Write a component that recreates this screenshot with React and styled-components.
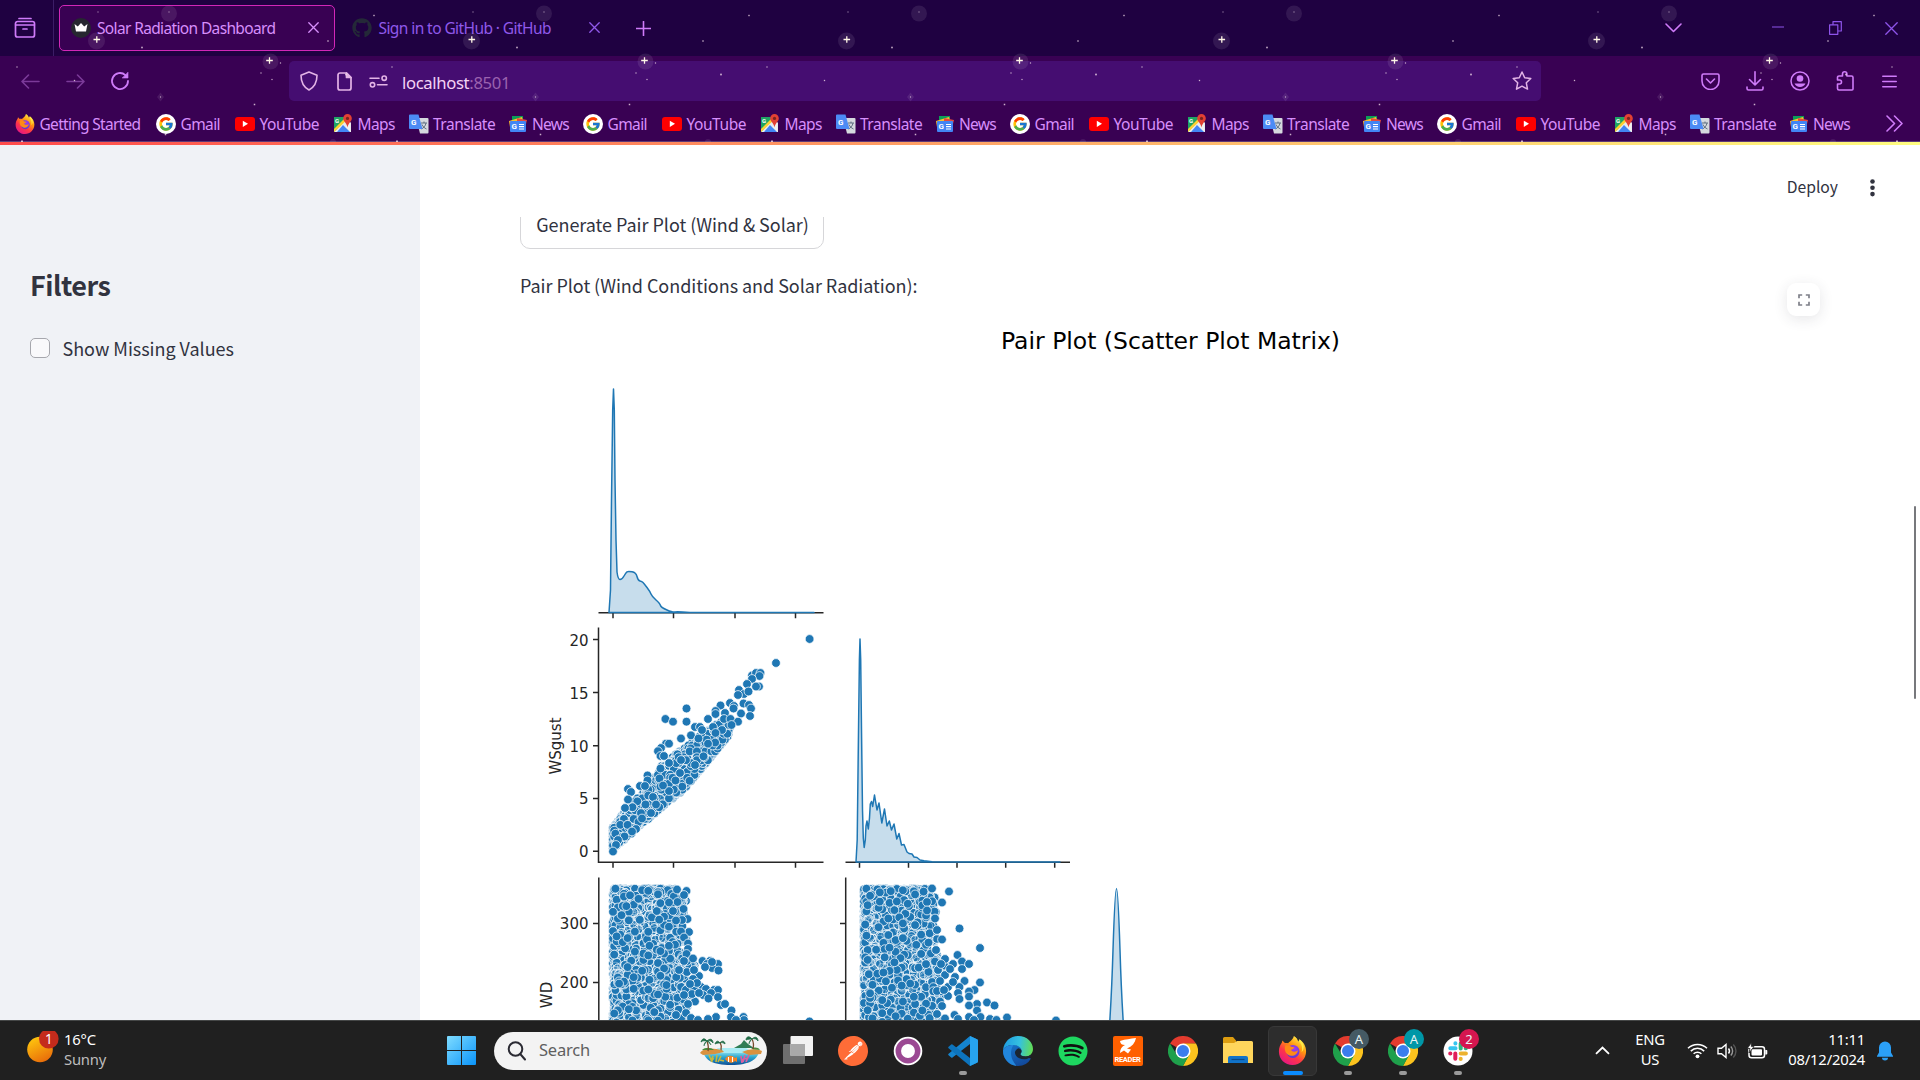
import React, { useMemo } from "react";
import styled, { createGlobalStyle } from "styled-components";
import { FcGoogle } from "react-icons/fc";
import { FaGithub, FaSpotify } from "react-icons/fa";
import { SiPostman } from "react-icons/si";

const GlobalStyle = createGlobalStyle`
  * { box-sizing: border-box; }
  html, body { margin: 0; padding: 0; width: 1920px; height: 1080px; overflow: hidden; background: #fff; }
  svg { display: block; flex: none; }
`;

const UI = `"Noto Sans", "Open Sans", sans-serif`;
const SOURCE = `"Noto Sans CJK JP", "Noto Sans CJK SC", sans-serif`;

const Screen = styled.div`
  display: flex;
  flex-direction: column;
  width: 1920px;
  height: 1080px;
  overflow: hidden;
`;

/* ---------- browser chrome ---------- */

const Chrome = styled.header`
  position: relative;
  display: flex;
  flex-direction: column;
  height: 145px;
  background: #390153;
  font-family: ${UI};
  color: #d78ffb;
`;
const StarLayer = styled.svg`
  position: absolute;
  left: 0;
  top: 0;
  pointer-events: none;
`;
const TabStrip = styled.div`
  display: flex;
  align-items: center;
  height: 56px;
  background: #1f0141;
`;
const Slot = styled.div`
  display: flex;
  align-items: center;
  justify-content: center;
  flex: none;
  width: ${(p) => p.$w}px;
  height: ${(p) => p.$h || 40}px;
  color: ${(p) => p.$c || "#cf7bf9"};
  margin-left: ${(p) => p.$ml || 0}px;
`;
const ViewSlot = styled(Slot)`
  height: 56px;
  border-right: 1px solid #3c1d66;
  padding-right: 3px;
`;
const Tab = styled.div`
  display: flex;
  align-items: center;
  width: ${(p) => p.$w}px;
  height: 46px;
  margin: 0 0 1px ${(p) => p.$ml}px;
  padding: 0 15px 0 11px;
  border: 1px solid ${(p) => (p.$active ? "#d227b8" : "transparent")};
  border-radius: 5px;
  background: ${(p) => (p.$active ? "#390153" : "transparent")};
  color: ${(p) => (p.$active ? "#d78ffb" : "#9059ea")};
`;
const TabTitle = styled.span`
  flex: 1;
  margin-left: ${(p) => p.$ml || 6}px;
  font-size: 15.5px;
  letter-spacing: ${(p) => p.$ls}px;
  line-height: 24px;
  white-space: nowrap;
`;
const Spacer = styled.div`
  flex: 1;
`;
const Toolbar = styled.div`
  display: flex;
  align-items: center;
  height: 50px;
`;
const UrlBar = styled.div`
  display: flex;
  align-items: center;
  width: 1252px;
  height: 40px;
  margin-left: 154px;
  border-radius: 5px;
  background: #450d71;
  color: #e3b4e6;
`;
const Address = styled.div`
  flex: 1;
  margin-left: 7px;
  font-size: 16.7px;
  letter-spacing: -0.36px;
  line-height: 24px;
  color: #f3d3f5;
  padding-top: 3px;
  span { color: #9a62ae; }
`;
const Bookmarks = styled.div`
  display: flex;
  align-items: center;
  height: 35px;
  padding-left: 15px;
`;
const Bookmark = styled.div`
  display: flex;
  align-items: center;
  flex: none;
  width: ${(p) => p.$w}px;
  font-size: 15.5px;
  letter-spacing: ${(p) => p.$ls}px;
  line-height: 24px;
  white-space: nowrap;
  color: #d78ffb;
  svg { margin-right: 4.5px; }
`;
const LoadLine = styled.div`
  height: 4px;
  border-top: 1px solid #5c3a78;
  background: linear-gradient(90deg, #ff4b4b, #fffd80);
`;

const STARS = [
  [98, 12, 1], [142, 47.5, 1.6], [374, 15.5, 1.4], [328, 41, 1.4], [280.5, 63, 1.2], [261, 73, 1.2],
  [272, 79.5, 1.2], [17, 67, 1.2], [74.5, 80.5, 1.3], [160.5, 97, 1.1], [254.5, 104.5, 1.5], [165.5, 134.5, 1.5],
  [346, 74.5, 1.7], [22, 141.5, 2], [169, 12, 1],
];
function Stars() {
  const tiles = [-1, 0, 1, 2, 3, 4, 5];
  return (
    <StarLayer width="1920" height="142" viewBox="0 0 1920 142">
      {tiles.map((t) => (
        <g key={t} transform={`translate(${t * 375} 0)`}>
          <g fill="#fff" fillOpacity="0.09">
            <circle cx="169" cy="13.5" r="8" />
            <circle cx="96.5" cy="41" r="8.5" />
            <circle cx="270.5" cy="61.5" r="8" />
            <path d="M160.5 92.5l3.5 4.5-3.5 4.5-3.5-4.5z" />
            <circle cx="333" cy="142" r="3" />
          </g>
          {STARS.map(([x, y, r], i) => (
            <rect key={i} x={x - r / 2} y={y - r / 2} width={r} height={r} fill="#f0dbe8" opacity="0.8" />
          ))}
          <g stroke="#fff6e6" strokeWidth="1.3">
            <path d="M93.5 39.5h6.6M96.8 36.2v6.6M266.2 60.5h6.6M269.5 57.2v6.6" />
          </g>
        </g>
      ))}
    </StarLayer>
  );
}

const line = { fill: "none", stroke: "currentColor", strokeWidth: 1.6, strokeLinecap: "round", strokeLinejoin: "round" };
function Glyph({ w, h, children, sw = 1.6 }) {
  return (
    <svg width={w} height={h} viewBox={`0 0 ${w} ${h}`} {...line} strokeWidth={sw}>
      {children}
    </svg>
  );
}
const CloseX = ({ s = 11 }) => (
  <Glyph w={s} h={s} sw={1.3}><path d={`M.8 .8L${s - 0.8} ${s - 0.8}M${s - 0.8} .8L.8 ${s - 0.8}`} /></Glyph>
);

function FirefoxLogo({ s }) {
  return (
    <svg width={s} height={s} viewBox="0 0 32 32">
      <defs>
        <linearGradient id="fxa" x1="0.85" y1="0.05" x2="0.25" y2="1">
          <stop offset="0" stopColor="#fff44f" /><stop offset="0.35" stopColor="#ff980e" />
          <stop offset="0.65" stopColor="#ff3647" /><stop offset="1" stopColor="#e31587" />
        </linearGradient>
        <radialGradient id="fxb" cx="0.6" cy="0.3" r="0.8">
          <stop offset="0" stopColor="#a23bf0" /><stop offset="1" stopColor="#4b3bd0" />
        </radialGradient>
      </defs>
      <path d="M17.500 0c2.500 1.500 4.200 3.700 4.800 6 .8-.2 1.300-1.400 1.300-2.500 4.800 3.200 7.400 8 7.400 13.300C31 25.300 24.300 32 16 32S1 25.600 1 17c0-3.900 1.400-7.400 3.200-9.500L4.800 5l2.800 2.800c1.200-.3 2.400-.2 3.500.2C12.300 6.200 16.200 5 17.500 0z" fill="url(#fxa)" />
      <circle cx="16.500" cy="17" r="7.200" fill="url(#fxb)" />
      <path d="M8 10.500c3-1 5.500 0 6.500 1.400l3.500.4c-.4 1.700-2.200 2.200-3.600 2.900 1 2.300 4.600 3.300 7.600.3-.4 4.500-4 6.700-7.500 6.300-5-.5-8.300-5.200-6.500-11.300z" fill="#ff8a16" />
      <path d="M17.500 0c3.500 5 11.500 8 8.500 18 4-4 2.800-11-2.400-14.500 0 1.100-.5 2.300-1.300 2.500-.6-2.300-2.300-4.500-4.800-6z" fill="#fff04a" opacity="0.85" />
    </svg>
  );
}
function GoogleBadge() {
  return (
    <svg width="20" height="20" viewBox="0 0 20 20">
      <circle cx="10" cy="10" r="10" fill="#fff" />
      <FcGoogle x="2" y="2" width="16" height="16" size={16} />
    </svg>
  );
}
const YoutubeLogo = () => (
  <svg width="20" height="20" viewBox="0 0 20 20">
    <rect x="0" y="3" width="20" height="14" rx="3" fill="#f00" />
    <path d="M7.800 6.700v6.200l5.200-3.100z" fill="#fff" />
  </svg>
);
const MapsLogo = () => (
  <svg width="20" height="20" viewBox="0 0 20 20">
    <path d="M1 3h13v15H1z" fill="#1fa463" />
    <path d="M1 18L14 4l4 5v9z" fill="#e8eaed" />
    <path d="M4 18l6-7 7 7z" fill="#4285f4" />
    <path d="M1 18v-3L12 4l2 2z" fill="#fdd131" />
    <path d="M12.500 13L17 9v8z" fill="#f1f1f1" />
    <path d="M14.500 0a4.300 4.300 0 014.300 4.300c0 3.200-3.400 4.600-4.300 9.200-.9-4.600-4.300-6-4.300-9.200A4.300 4.300 0 0114.500 0z" fill="#e34133" />
    <circle cx="14.500" cy="4.400" r="1.600" fill="#7b231d" />
    <text x="2" y="9" fontSize="6" fontWeight="700" fill="#fff" fontFamily="Roboto">G</text>
  </svg>
);
const TranslateLogo = () => (
  <svg width="20" height="20" viewBox="0 0 20 20">
    <path d="M7 4h11.500a1 1 0 011 1v13.500a1 1 0 01-1 1H11z" fill="#d5d9de" />
    <path d="M12 9h6M15 7.500V9M17 9c-.5 3-2.500 5-4.500 6M13 10.500c.8 2 2.500 3.600 4.500 4.500" stroke="#5f6f80" fill="none" />
    <path d="M1 .5h8.500L13.500 15H1a1 1 0 01-1-1V1.500a1 1 0 011-1z" fill="#4c8bf5" />
    <text x="2" y="10.500" fontSize="8" fontWeight="700" fill="#fff" fontFamily="Roboto">G</text>
  </svg>
);
const NewsLogo = () => (
  <svg width="20" height="20" viewBox="0 0 20 20">
    <path d="M4 2h11v7H4z" fill="#0c9d58" />
    <path d="M1 7l13-4 2 7L2 13z" fill="#fbc02d" />
    <path d="M9 4l10 2-2 8H9z" fill="#e04a3f" />
    <rect x="2" y="7" width="16" height="11" rx="1" fill="#4285f4" />
    <text x="3.500" y="15.300" fontSize="8" fontWeight="700" fill="#fff" fontFamily="Roboto">G</text>
    <path d="M11 10.500h5M11 12.700h5M11 15h5" stroke="#fff" strokeWidth="1.200" />
  </svg>
);

const MARKS = [
  ["Gmail", GoogleBadge, 79, -0.6],
  ["YouTube", YoutubeLogo, 98, -0.45],
  ["Maps", MapsLogo, 75.5, -0.6],
  ["Translate", TranslateLogo, 99, -0.5],
  ["News", NewsLogo, 75.5, -0.75],
];

function BrowserChrome() {
  return (
    <Chrome>
      <TabStrip>
        <ViewSlot $w={54}>
          <Glyph w={22} h={22} sw={1.7}>
            <path d="M5 1.500h12M1.500 7.500v-1a2 2 0 012-2h15a2 2 0 012 2v1" />
            <path d="M1.500 8h19v10a2 2 0 01-2 2h-15a2 2 0 01-2-2zM9 12h4" />
          </Glyph>
        </ViewSlot>
        <Tab $w={276} $ml={5} $active>
          <svg width="20" height="20" viewBox="0 0 20 20">
            <circle cx="10" cy="10" r="10" fill="#262730" />
            <path d="M3.500 6l3.300 2.500L10 5l3.200 3.500L16.500 6 15 13.500H5z" fill="#fff" />
          </svg>
          <TabTitle $ls={-0.64}>Solar Radiation Dashboard</TabTitle>
          <CloseX />
        </Tab>
        <Tab $w={276} $ml={4.500}>
          <FaGithub size={20} color="#242938" />
          <TabTitle $ls={-0.58} $ml={7}>Sign in to GitHub · GitHub</TabTitle>
          <CloseX />
        </Tab>
        <Slot $w={24} $ml={16}><Glyph w={15} h={15}><path d="M7.500 .5v14M.5 7.500h14" /></Glyph></Slot>
        <Spacer />
        <Slot $w={40}><Glyph w={17} h={10}><path d="M1 1l7.500 7.500L16 1" /></Glyph></Slot>
        <Slot $w={60} $ml={55} $c="#8e54ea"><Glyph w={12} h={5} sw={1.1}><path d="M0 1h12" /></Glyph></Slot>
        <Slot $w={55} $c="#8e54ea">
          <Glyph w={13} h={14} sw={1.2}><path d="M.6 3.800h8.200v9.500H.6zM4 3.500V.7h8.300v9.300H9" /></Glyph>
        </Slot>
        <Slot $w={57} $c="#8e54ea"><CloseX s={13} /></Slot>
      </TabStrip>
      <Toolbar>
        <Slot $w={30} $ml={15} $c="#7b3a99"><Glyph w={19} h={15}><path d="M18 7.500H1.200M7.500 1L1 7.500 7.500 14" /></Glyph></Slot>
        <Slot $w={30} $ml={15} $c="#7b3a99"><Glyph w={19} h={15}><path d="M1 7.500h16.800M11.500 1L18 7.500 11.500 14" /></Glyph></Slot>
        <Slot $w={30} $ml={15}>
          <svg width="20" height="20" viewBox="0 0 20 20" {...line} strokeWidth="1.800">
            <path d="M18 10a8 8 0 11-2.600-5.900" /><path d="M18 1.500V7h-5.500z" fill="currentColor" strokeWidth="0.600" />
          </svg>
        </Slot>
        <UrlBar>
          <Slot $w={40} $c="#e3b4e6"><Glyph w={18} h={20}><path d="M9 1l8 3.200c0 7-2 11.500-8 14.800C3 15.700 1 11.200 1 4.200z" /></Glyph></Slot>
          <Slot $w={30} $c="#e3b4e6">
            <Glyph w={15} h={19} sw={1.700}><path d="M9.500 1H3a2 2 0 00-2 2v13a2 2 0 002 2h9a2 2 0 002-2V5.500z" /><path d="M9.500 1v4.500H14z" fill="currentColor" /></Glyph>
          </Slot>
          <Slot $w={33} $ml={3} $c="#e3b4e6">
            <Glyph w={19} h={13}><path d="M1 3.200h9M8.500 9.800H18" /><circle cx="15.200" cy="3.200" r="2.200" /><circle cx="3.500" cy="9.800" r="2.200" /></Glyph>
          </Slot>
          <Address>localhost<span>:8501</span></Address>
          <Slot $w={38} $c="#e3b4e6">
            <Glyph w={20} h={20} sw={1.500}><path d="M10 1l2.700 5.700 6.100.8-4.500 4.300 1.200 6.300L10 15.200l-5.500 2.900 1.200-6.300L1.200 7.500l6.100-.8z" /></Glyph>
          </Slot>
        </UrlBar>
        <Spacer />
        <Slot $w={44}><Glyph w={19} h={17}><path d="M2.500 1h14a1.500 1.500 0 011.500 1.500V8a8.500 8.500 0 01-17 0V2.500A1.500 1.500 0 012.500 1zM5.500 6l4 4 4-4" /></Glyph></Slot>
        <Slot $w={45}><Glyph w={18} h={20}><path d="M9 .8v13M3.500 8.500L9 14l5.500-5.500M1 16v1.500A1.500 1.500 0 002.500 19h13a1.500 1.500 0 001.500-1.500V16" /></Glyph></Slot>
        <Slot $w={46}>
          <svg width="20" height="20" viewBox="0 0 20 20">
            <circle cx="10" cy="10" r="9" fill="none" stroke="currentColor" strokeWidth="1.500" />
            <circle cx="10" cy="7.500" r="3.300" fill="currentColor" /><path d="M4.500 12.500h11c-1 2.300-3 3.500-5.500 3.500s-4.500-1.200-5.500-3.500z" fill="currentColor" />
          </svg>
        </Slot>
        <Slot $w={44}>
          <Glyph w={18} h={20}><path d="M1.500 6.500a1.500 1.500 0 011.500-1.500h3.500V3a2.200 2.200 0 014.400 0v2h4.600A1.500 1.500 0 0117 6.500V18a1 1 0 01-1 1H3a1.500 1.500 0 01-1.500-1.500V13h2a2 2 0 000-4h-2z" /></Glyph>
        </Slot>
        <Slot $w={45}><Glyph w={15} h={13}><path d="M.8 1.200h13.400M.8 6.500h13.400M.8 11.800h13.400" /></Glyph></Slot>
        <Slot $w={8} />
      </Toolbar>
      <Bookmarks>
        <Bookmark $w={141} $ls={-0.7}><FirefoxLogo s={20} />Getting Started</Bookmark>
        {[0, 1, 2, 3].map((n) =>
          MARKS.map(([name, Logo, w, ls]) => (
            <Bookmark key={name + n} $w={w} $ls={ls}><Logo />{name}</Bookmark>
          ))
        )}
        <Slot $w={30} $h={30} $ml={15}><Glyph w={17} h={17}><path d="M1 1l7.500 7.500L1 16M8.500 1L16 8.500 8.500 16" /></Glyph></Slot>
      </Bookmarks>
      <LoadLine />
      <Stars />
    </Chrome>
  );
}

/* ---------- dashboard page ---------- */

const Page = styled.div`
  position: relative;
  display: flex;
  height: 875px;
  background: #fff;
  font-family: ${SOURCE};
  color: #31333f;
`;
const Sidebar = styled.aside`
  display: flex;
  flex-direction: column;
  width: 420px;
  padding: 117px 30px 0;
  background: #f0f2f6;
`;
const Heading = styled.h2`
  margin: 0;
  font-size: 27px;
  font-weight: 700;
  line-height: 46px;
  letter-spacing: ${(p) => p.$ls}px;
`;
const CheckRow = styled.label`
  display: flex;
  align-items: center;
  gap: 12.5px;
  margin-top: 24px;
  height: 32px;
  font-size: 18px;
  letter-spacing: -0.03px;
`;
const CheckBox = styled.span`
  width: 20px;
  height: 20px;
  margin-bottom: 1px;
  border: 1px solid #a6a7ad;
  border-radius: 5px;
  background: #f9f9fb;
`;
const Main = styled.main`
  display: flex;
  flex-direction: column;
  width: 1500px;
`;
const Header = styled.div`
  display: flex;
  align-items: center;
  justify-content: flex-end;
  height: 72px;
  padding: 14px 42px 0 0;
  font-size: 15.7px;
`;
const Deploy = styled.span`
  margin: 0 29px 2px 0;
  line-height: 24px;
`;
const Scroller = styled.div`
  display: flex;
  flex-direction: column;
  align-items: flex-start;
  height: 803px;
  padding-left: 100px;
  overflow: hidden;
`;
const PlotButton = styled.button`
  flex: none;
  width: 304px;
  height: 50px;
  margin-top: -18px;
  padding: 0 0 0 1px;
  border: 1px solid #d6d6d9;
  border-radius: 10px;
  background: #fff;
  color: #31333f;
  font: 18px ${SOURCE};
  letter-spacing: -0.04px;
  white-space: nowrap;
`;
const Caption = styled.p`
  margin: 20px 0 9px;
  font-size: 18px;
  letter-spacing: -0.04px;
  line-height: 32px;
`;
const ExpandButton = styled.div`
  position: absolute;
  left: 1787px;
  top: 138px;
  display: flex;
  align-items: center;
  justify-content: center;
  width: 33px;
  height: 33px;
  border-radius: 9px;
  background: #fff;
  box-shadow: 0 3px 14px rgba(49, 51, 63, 0.12);
  color: #7f8089;
`;
const ScrollThumb = styled.div`
  position: absolute;
  right: 4px;
  top: 361px;
  width: 2px;
  height: 193px;
  border-radius: 1px;
  background: #77787c;
`;

function makeRandom(seed) {
  let s = seed;
  return () => {
    s = (s * 1664525 + 1013904223) % 4294967296;
    return s / 4294967296;
  };
}

const GUST_MARKS = [
  [809.6, 639], [776, 663], [686.5, 708.500], [665.400, 719], [673, 721.700], [686.500, 721.700],
  [752, 675.500], [756, 673], [760.500, 673], [759.500, 676], [752, 679], [747, 684], [759, 686.500], [756, 686.500], [739, 690],
  [744, 694], [738, 695], [748.500, 691.500], [730, 703], [734, 706], [743.500, 703.500], [749, 705], [751, 708.500], [741, 713.500],
  [750, 716], [720.500, 705.500], [715.500, 711], [715.500, 714], [725, 713], [733.500, 708.500], [708, 719], [724, 719], [730.500, 719],
  [738, 721.700], [731.500, 725], [713, 727], [695, 727], [700, 727], [702, 730], [722, 730], [715.500, 733], [691, 735.300], [698.500, 738.500],
  [681, 738.500], [666, 743.700], [669, 743.700], [661, 748], [658, 751.200], [660.500, 756], [664, 756], [708, 743.700], [703.500, 756.300],
  [660.500, 768.500], [669, 763], [681, 760], [695, 765], [647.500, 775.500], [647.500, 780.500], [659.500, 778.500], [675.500, 780.500],
  [640, 786], [645, 786], [628, 789], [631, 792], [628, 799.500], [625, 808], [669, 791], [653, 797], [656, 804.500], [645.500, 804.500],
  [663, 785.500], [651, 813], [642, 818.500], [636, 829], [632, 831.500], [624.500, 836.500], [618, 840], [616, 845], [613, 851.500], [680, 773],
];
const WD_A_MARKS = [
  [686.500, 891], [677, 889.500], [684, 895], [677.500, 902], [669, 902.500], [673, 911], [687.500, 919], [682, 920], [676, 920.500], [689, 932],
  [681, 931.500], [684, 937.500], [688, 943.500], [688, 949], [686.500, 954], [693, 958.500], [702.500, 961], [710, 961], [718, 964], [707, 964],
  [712, 968], [718.500, 970.500], [699, 976], [701, 987], [706, 989], [714, 990], [718, 990], [711, 993], [703, 995], [718, 997], [708.500, 998.500],
  [695, 1001.500], [721, 1005], [725, 1004], [731.500, 1010.500], [731, 1017], [743.500, 1017], [744, 1020], [716, 1017], [708, 1019], [809.500, 1021.500],
  [686, 1013], [676, 1015], [691, 1018], [698, 1020], [736, 1020], [687, 972], [679, 970], [684, 961],
  [694, 970], [693, 979], [694, 988], [697, 983], [690, 984], [692, 994], [699, 993], [712, 962], [705, 967], [688, 1004], [684, 995],
];
const WD_B_MARKS = [
  [949, 891.500], [942, 902.500], [932, 888.500], [927, 902], [927, 910.500], [935, 918.500], [937, 930], [942, 939.500], [959.500, 928.500],
  [980, 948], [957.500, 955], [945, 959], [935, 961.500], [953, 964], [962, 961.500], [969, 964], [962, 969], [945, 975], [955, 977],
  [964.500, 981], [980, 982.500], [948, 987], [959.500, 987], [974.500, 990], [969, 991.500], [958, 993], [969, 996.500], [948, 996], [959.500, 999],
  [940, 1001.500], [942, 1006], [977, 1004], [987, 1002.500], [994.500, 1005.500], [969, 1005.500], [977, 1010.500], [937, 1014], [954.500, 1015],
  [969, 1017], [980.500, 1017], [990, 1019], [1007, 1017.500], [996.500, 1020], [974, 1020], [945, 1018.500], [1056, 1020.500], [958, 1019],
  [938, 970], [940, 981], [937, 991], [950, 969], [941, 964], [944, 990], [936, 950], [953, 982],
];

const GUST_TOP = [[0, 2.2], [1.2, 4], [3, 6.2], [4, 8], [6, 9.8], [8, 11.6], [9.6, 12.6]];
function topGust(ws) {
  for (let i = 1; i < GUST_TOP.length; i++) {
    const [a, ya] = GUST_TOP[i - 1];
    const [b, yb] = GUST_TOP[i];
    if (ws <= b) return ya + ((ws - a) / (b - a)) * (yb - ya);
  }
  return 12.6;
}
function buildGust() {
  const rnd = makeRandom(77);
  const pts = [];
  for (let i = 0; i < 2600; i++) {
    const ws = Math.pow(rnd(), 1.2) * 9.6;
    const lo = 0.35 + ws * 0.97 + Math.max(0, ws - 6) * 0.42;
    const gust = lo + Math.pow(rnd(), 1.2) * (topGust(ws) - lo);
    pts.push([613 + Math.round(ws * 10) * 1.216, 851.300 - (Math.round(gust * 3.600) / 3.600) * 10.580]);
  }
  return pts;
}
function buildWind(seed, x0, edge) {
  const rnd = makeRandom(seed);
  const pts = [];
  for (let i = 0; i < 5200; i++) {
    const y = 888.500 + rnd() * 136;
    const t = (y - 888) / 134;
    const reach = edge + (t > 0.5 && t < 0.95 ? 7 : 0) + 4 * Math.sin(y * 0.21) + 3 * Math.sin(y * 0.47);
    const x = x0 + Math.round((Math.pow(rnd(), 1.08) * reach) / 1.216) * 1.216;
    pts.push([x, y]);
  }
  return pts;
}

const Dots = React.memo(function Dots({ points, marks, loose, halos }) {
  const cut = points.length - loose;
  return (
    <g fill="#1f77b4" stroke="#fff" strokeWidth="0.750">
      {points.slice(0, cut).map(([x, y], i) => <circle key={i} cx={x} cy={y} r="4.400" />)}
      <g fill="none" strokeOpacity="0.450">
        {points.slice(cut - halos, cut).map(([x, y], i) => <circle key={i} cx={x} cy={y} r="4.100" />)}
      </g>
      {points.slice(cut).map(([x, y], i) => <circle key={"t" + i} cx={x} cy={y} r="4.400" />)}
      {marks.map(([x, y], i) => <circle key={"m" + i} cx={x} cy={y} r="4.400" />)}
    </g>
  );
});

const KDE_WS =
  "M609 612.500L610.500 590 611.500 500 612.700 410 613.500 389 614.300 410 615 480 616 540 617 572Q618 579.500 620 579.500T624 576 627 571.800 632 571.800 637 576.500 640 581 643 582.500 647 587.500 651 594 656 600 660.500 605.500 667 610 675 612 690 612.500H814";
const KDE_GUST =
  "M856 862L857.200 840 858.400 740 859.400 660 860 639 860.700 660 861.500 730 862.500 810 863.300 838 864.200 847.500 865.300 840 866 826 867 821 868.300 829 869.500 818 870.300 804 871.500 801.500 872.700 806.500 874.500 795 877 810 879 803 881.800 823 884.500 809 887 826 889.300 821 891.500 830 894 824 896.800 839 899 833.500 901.500 845 904 844.500 907 852 909 853.500 912 854 914 857 917 857.500 920 860 924 860.800 932 861.700 945 862H1060";
const KDE_WD = "M1108.500 1040Q1111.500 1000 1113 950Q1115 888.500 1116.500 888.500T1120 950Q1121.500 1000 1124.500 1040";

function PairPlot() {
  const gust = useMemo(buildGust, []);
  const windA = useMemo(() => buildWind(5, 613, 68), []);
  const windB = useMemo(() => buildWind(19, 864, 68), []);
  return (
    <svg width="1300" height="710" viewBox="520 310 1300 710" fontFamily="DejaVu Sans" fill="#262626">
      <text x="1170.500" y="349" fontSize="23.500" textAnchor="middle" textLength="339" fill="#000">Pair Plot (Scatter Plot Matrix)</text>
      <g fill="none" stroke="#262626" strokeWidth="1.500">
        <path d="M598.500 612.700H823.500M613 612.700v5.500M673.500 612.700v5.500M735 612.700v5.500M795.500 612.700v5.500" />
        <path d="M598.500 627.500V862.300H823.500M613 862.300v5.500M673.500 862.300v5.500M735 862.300v5.500M795.500 862.300v5.500" />
        <path d="M593 639.500h5.500M593 692.500h5.500M593 745.700h5.500M593 798.500h5.500M593 851.300h5.500" />
        <path d="M845.500 862.300H1070M859.500 862.300v5.500M908.500 862.300v5.500M957 862.300v5.500M1005.700 862.300v5.500M1054.700 862.300v5.500" />
        <path d="M598.800 877.500V1030M593 923.400h5.500M593 982.500h5.500M845.700 877.500V1030M840 923.400h5.500M840 982.500h5.500" />
      </g>
      <g fontSize="15" textAnchor="end">
        <text x="588.500" y="645.500">20</text>
        <text x="588.500" y="698.500">15</text>
        <text x="588.500" y="751.500">10</text>
        <text x="588.500" y="804.300">5</text>
        <text x="588.500" y="857.200">0</text>
        <text x="588.500" y="929.300">300</text>
        <text x="588.500" y="988.300">200</text>
      </g>
      <g fontSize="15" textAnchor="middle">
        <text transform="translate(561 746) rotate(-90)">WSgust</text>
        <text transform="translate(552 995) rotate(-90)">WD</text>
      </g>
      <g fill="rgba(31,119,180,0.25)" stroke="#1f77b4" strokeWidth="1.500" strokeLinejoin="round">
        <path d={KDE_WS + "H609z"} />
        <path d={KDE_GUST + "H856z"} />
        <path d={KDE_WD} />
      </g>
      <Dots points={gust} marks={GUST_MARKS} loose={150} halos={70} />
      <Dots points={windA} marks={WD_A_MARKS} loose={190} halos={230} />
      <Dots points={windB} marks={WD_B_MARKS} loose={190} halos={230} />
    </svg>
  );
}

function Dashboard() {
  return (
    <Page>
      <Sidebar>
        <Heading $ls={-0.5}>Filters</Heading>
        <CheckRow><CheckBox />Show Missing Values</CheckRow>
      </Sidebar>
      <Main>
        <Header>
          <Deploy>Deploy</Deploy>
          <svg width="11" height="20" viewBox="0 0 11 20" fill="#31333f">
            <circle cx="5.500" cy="3.500" r="2.300" /><circle cx="5.500" cy="9.800" r="2.300" /><circle cx="5.500" cy="16.100" r="2.300" />
          </svg>
        </Header>
        <Scroller>
          <PlotButton>Generate Pair Plot (Wind &amp; Solar)</PlotButton>
          <Caption>Pair Plot (Wind Conditions and Solar Radiation):</Caption>
          <PairPlot />
        </Scroller>
      </Main>
      <ExpandButton>
        <svg width="12" height="12" viewBox="0 0 12 12" fill="none" stroke="currentColor" strokeWidth="1.700">
          <path d="M1 4.200V1h3.200M7.800 1H11v3.200M11 7.800V11H7.800M4.200 11H1V7.800" />
        </svg>
      </ExpandButton>
      <ScrollThumb />
    </Page>
  );
}

/* ---------- taskbar ---------- */

const Taskbar = styled.footer`
  display: flex;
  align-items: center;
  height: 60px;
  border-top: 1px solid #454747;
  background: #202020;
  color: #fff;
  font-family: ${UI};
  font-size: 14.8px;
  line-height: 20px;
`;
const Weather = styled.div`
  display: flex;
  align-items: center;
  width: 420px;
  padding-left: 26px;
`;
const Lines = styled.div`
  display: flex;
  flex-direction: column;
  width: ${(p) => p.$w}px;
  margin-left: ${(p) => p.$ml || 0}px;
  margin-bottom: 3px;
  text-align: ${(p) => p.$align || "left"};
  letter-spacing: ${(p) => p.$ls || 0}px;
  white-space: nowrap;
  span:nth-child(2) { color: ${(p) => p.$sub || "#fff"}; }
`;
const SearchPill = styled.div`
  display: flex;
  align-items: center;
  width: 273px;
  height: 38px;
  margin: 0 3px 0 4px;
  padding: 0 4px 0 13px;
  border-radius: 19px;
  background: #f3f3f3;
  color: #5f5f5f;
  font-size: 16.5px;
  letter-spacing: -0.2px;
  span { flex: 1; margin: 0 0 1px 13px; }
`;
const AppSlot = styled.div`
  display: flex;
  flex-direction: column;
  align-items: center;
  justify-content: center;
  position: relative;
  width: 55px;
  height: 50px;
`;
const ActiveTile = styled(AppSlot)`
  width: 49px;
  margin: 0 3px;
  border: 1px solid #383838;
  border-radius: 6px;
  background: #2d2d2d;
`;
const Running = styled.i`
  position: absolute;
  bottom: ${(p) => (p.$active ? 0 : 1)}px;
  width: ${(p) => (p.$active ? 20 : 8)}px;
  height: 4px;
  border-radius: 2px;
  background: ${(p) => (p.$active ? "#0a8cff" : "#9a9a9a")};
`;
const Badge = styled.b`
  position: absolute;
  right: 6px;
  top: 3px;
  width: 20px;
  height: 20px;
  border-radius: 50%;
  background: ${(p) => p.$c};
  color: #e8f4f4;
  font: 400 13px/20px ${UI};
  text-align: center;
`;

function ChromeLogo() {
  return (
    <svg width="30" height="30" viewBox="-15 -15 30 30">
      <path d="M0 0L-13 -7.500A15 15 0 0113 -7.500L0 -7z" fill="#e33b2e" />
      <path d="M13 -7.500A15 15 0 010 15L6 3.500 0 -7.500z" fill="#fcc31e" />
      <path d="M-13 -7.500A15 15 0 000 15L6.300 4l-12.500-.2z" fill="#1fa04b" />
      <circle r="7.500" fill="#fff" />
      <circle r="6" fill="#3b7ded" />
    </svg>
  );
}
const StartLogo = () => (
  <svg width="29" height="29" viewBox="0 0 29 29">
    <defs><linearGradient id="win" x1="0" y1="0" x2="1" y2="1"><stop offset="0" stopColor="#7fdcff" /><stop offset="1" stopColor="#0a94fa" /></linearGradient></defs>
    <path d="M1 0h13v14H0V1a1 1 0 011-1zM15 0h13a1 1 0 011 1v13H15zM0 15h14v14H1a1 1 0 01-1-1zM15 15h14v13a1 1 0 01-1 1H15z" fill="url(#win)" />
  </svg>
);
const Island = () => (
  <svg width="63" height="31" viewBox="0 0 63 31">
    <defs><linearGradient id="sea" x1="0" y1="0" x2="0" y2="1"><stop offset="0" stopColor="#9be7f2" /><stop offset="0.450" stopColor="#2aa6cf" /><stop offset="1" stopColor="#0d4f96" /></linearGradient></defs>
    <path d="M3 16h56c-1 8-9 14-28 14S5 25 3 16z" fill="url(#sea)" />
    <path d="M18 13h28l8 5H10z" fill="#a9ebf3" />
    <path d="M34 13l7-4 3-4 4 4 6 4z" fill="#2f7d54" />
    <path d="M0 18c3-5 12-5 22-3l2 2-9 2-12 1zM42 17c6-3 14-4 20-1l-1 3-12 1z" fill="#d9923f" />
    <path d="M2 15c3-3 9-3 12 0zM51 14c3-2 7-2 9 1z" fill="#4b8b3b" />
    <path d="M8 16c1-4 0-7-1-10M21 15c1-4 0-6-1-8M53 14c1-4 0-8-1-10" stroke="#7a4a2b" strokeWidth="1.300" fill="none" />
    <path d="M7 6C4 2 2 4 1 7c2-2 4-1 6-1 2-1 5 0 6 2 0-4-3-5-6-2zM7 6c-2 1-3 3-3 5M7 6c2 0 3 2 4 4M20 8c-2-3-4-2-5 1 2-1 3-1 5-1 2-1 4 0 5 1 0-3-3-4-5-1zM52 4c-3-4-6-2-6 1 2-1 4-1 6-1 2-1 5 0 6 2 0-4-3-5-6-2zM52 4c-2 1-3 3-3 5" fill="#1f6b45" stroke="#1f6b45" strokeWidth="0.800" />
    <path d="M9 20l3 7M13 21l-1 5M17 20l-1 7M21 21l-3 6M20 25l4 1M10 23l4 1" stroke="#c8b83c" strokeWidth="1.600" />
    <path d="M41 21l1 7M45 20l-2 7M49 20l-3 7M41 25l7-2" stroke="#d85fa0" strokeWidth="1.700" />
    <path d="M25 24c3-4 7-4 10-1l2-1v5l-2-1c-3 3-7 2-10-2z" fill="#f58220" />
    <path d="M28.500 22v5M32.500 22v5" stroke="#fff" strokeWidth="1.100" />
  </svg>
);
const TaskViewLogo = () => (
  <svg width="30" height="29" viewBox="0 0 30 29">
    <rect x="0" y="8" width="22" height="20" rx="1" fill="#6f6f6f" />
    <rect x="7.500" y="0" width="22.500" height="20" rx="1" fill="#f2f2f2" />
    <rect x="7.500" y="8" width="14.500" height="12" fill="#a9a9a9" />
  </svg>
);
const VsCodeLogo = () => (
  <svg width="30" height="30" viewBox="0 0 30 30">
    <path d="M22 0l7 3.200A1.500 1.500 0 0130 4.500L22 8 4.500 21.500a1 1 0 01-1.300 0L.6 19.200a1 1 0 010-1.500z" fill="#1484cf" />
    <path d="M22 30l7-3.200a1.500 1.500 0 001-1.300L22 22 4.500 8.500a1 1 0 00-1.300 0L.6 10.800a1 1 0 000 1.500z" fill="#0d74bd" />
    <path d="M22 0l7 3.200A1.700 1.700 0 0130 4.700v20.600a1.700 1.700 0 01-1 1.500L22 30z" fill="#27a3ee" />
  </svg>
);
const EdgeLogo = () => (
  <svg width="30" height="30" viewBox="0 0 30 30">
    <defs>
      <linearGradient id="edA" x1="0" y1="0.300" x2="1" y2="0.400"><stop offset="0" stopColor="#1d9be2" /><stop offset="0.550" stopColor="#35c1e0" /><stop offset="1" stopColor="#62dd56" /></linearGradient>
      <linearGradient id="edB" x1="0" y1="0" x2="0.600" y2="1"><stop offset="0" stopColor="#1779cf" /><stop offset="1" stopColor="#124a9c" /></linearGradient>
    </defs>
    <path d="M15 30A15 15 0 010 15L10 8l9 3 .5 9.500 8.500 2A15 15 0 0115 30z" fill="url(#edB)" />
    <path d="M0 14C1 5.500 7.500 0 15.200 0 24 0 30 6.400 30 13c0 4.500-3.300 7.500-7.500 7.500-3.300 0-5-1.200-5-2.300 0-.8 1.100-1.300 1.100-3.300C18.600 12 15.500 9 10.500 9 5.500 9 1.500 11 0 14z" fill="url(#edA)" />
    <path d="M12 16c.5-1.800 1.600-3 3.500-3.800 2 .8 3.100 1.700 3.100 2.900 0 1.800-1.100 2.300-1.100 3.100 0 1.100 1.700 2.300 5 2.300 1.900 0 3.600-.5 5-1.500.6.200.7.800.3 1.300-1.300 1.800-3 2.800-5.700 2.900-5.500.4-10.500-2.700-10.100-7.200z" fill="#1b2633" />
    <path d="M10.500 9.100C7 14 6.500 22 13.500 29.900 5 29 0 22 0 14c1.500-3 5.500-5 10.500-4.900z" fill="#2286dc" />
  </svg>
);
const FoxitTile = styled.div`
  display: flex;
  flex-direction: column;
  align-items: center;
  width: 30px;
  height: 30px;
  padding-top: 2px;
  border-radius: 2px;
  background: #ff6000;
  color: #fff;
  font: 700 7.5px/11px Roboto, sans-serif;
  letter-spacing: -0.3px;
`;
const FoxitLogo = () => (
  <FoxitTile>
    <svg width="18" height="16" viewBox="0 0 18 16">
      <path d="M1 3c6-2 10-2 16-3-1 5-4 8.500-9 10.500l4 1-3 4-4-3L1 15c0-4 2-6.500 5-8-3 0-4.500-1-5-4z" fill="#fff" />
    </svg>
    READER
  </FoxitTile>
);
const FolderLogo = () => (
  <svg width="30" height="27" viewBox="0 0 30 27">
    <path d="M0 1.500A1.500 1.500 0 011.500 0H10l3 3.500V9H0z" fill="#dd9d10" />
    <path d="M0 6h11l3-2h14.500A1.500 1.500 0 0130 5.500V26H0z" fill="#ffd65c" />
    <path d="M5 26v-5a2 2 0 012-2h16a2 2 0 012 2v5z" fill="#1173c9" />
    <path d="M8.500 22.500h13" stroke="#0a4a86" strokeWidth="1.200" />
  </svg>
);
const SlackLogo = () => (
  <svg width="30" height="30" viewBox="0 0 30 30">
    <circle cx="15" cy="15" r="14.500" fill="#fff" />
    <g strokeWidth="4" strokeLinecap="round">
      <path d="M7.300 12.200h5.200M12.400 7.200v.2" stroke="#36c5f0" />
      <path d="M17.700 7.500v5M22.700 12.300h.2" stroke="#2eb67d" />
      <path d="M17.700 17.600h5.200M17.700 22.700v.2" stroke="#ecb22e" />
      <path d="M12.300 17.600v5.200M7.200 17.600h.2" stroke="#e01e5a" />
    </g>
  </svg>
);

function TaskbarView() {
  return (
    <Taskbar>
      <Weather>
        <svg width="34" height="40" viewBox="0 0 34 40">
          <defs><linearGradient id="sun" x1="0.200" y1="0" x2="0.700" y2="1"><stop offset="0" stopColor="#ffc90e" /><stop offset="1" stopColor="#e86a0a" /></linearGradient></defs>
          <circle cx="14" cy="18.500" r="12.800" fill="url(#sun)" />
          <circle cx="22.800" cy="7.800" r="9.800" fill="#c42b1c" />
          <text x="22.800" y="12.500" fontSize="13.500" fill="#fff" textAnchor="middle" fontFamily="Noto Sans">1</text>
        </svg>
        <Lines $w={90} $ml={4} $ls={-0.200} $sub="#bdbdbd"><span>16°C</span><span>Sunny</span></Lines>
      </Weather>
      <Slot $w={29} $ml={27}><StartLogo /></Slot>
      <Slot $w={14} />
      <SearchPill>
        <svg width="19" height="20" viewBox="0 0 19 20" fill="none" stroke="#2b2b33" strokeWidth="2">
          <circle cx="8.500" cy="8" r="6.800" /><path d="M13.200 13l4.800 5.500" strokeLinecap="round" />
        </svg>
        <span>Search</span>
        <Island />
      </SearchPill>
      <AppSlot><TaskViewLogo /></AppSlot>
      <AppSlot>
        <svg width="30" height="30" viewBox="0 0 30 30"><circle cx="15" cy="15" r="14" fill="#fff" /><SiPostman size={30} color="#ff6c37" /></svg>
      </AppSlot>
      <AppSlot>
        <svg width="30" height="30" viewBox="0 0 30 30"><circle cx="15" cy="15" r="14.300" fill="#fff" /><circle cx="15" cy="15" r="9.700" fill="#fff" stroke="#9b4993" strokeWidth="5.500" /></svg>
      </AppSlot>
      <AppSlot><VsCodeLogo /><Running /></AppSlot>
      <AppSlot><EdgeLogo /></AppSlot>
      <AppSlot>
        <svg width="30" height="30" viewBox="0 0 30 30"><circle cx="15" cy="15" r="13" fill="#111" /><FaSpotify size={30} color="#1ed760" /></svg>
      </AppSlot>
      <AppSlot><FoxitLogo /></AppSlot>
      <AppSlot><ChromeLogo /></AppSlot>
      <AppSlot><FolderLogo /></AppSlot>
      <ActiveTile><FirefoxLogo s={29} /><Running $active /></ActiveTile>
      <AppSlot><ChromeLogo /><Badge $c="#455a64">A</Badge><Running /></AppSlot>
      <AppSlot><ChromeLogo /><Badge $c="#0097a7">A</Badge><Running /></AppSlot>
      <AppSlot><SlackLogo /><Badge $c="#d4164f">2</Badge><Running /></AppSlot>
      <Spacer />
      <Slot $w={30}><svg width="15" height="9" viewBox="0 0 15 9" fill="none" stroke="#fff" strokeWidth="1.800"><path d="M1 7.800l6.500-6.300L14 7.800" /></svg></Slot>
      <Lines $w={40} $ml={13} $align="center" $ls={-0.250}><span>ENG</span><span>US</span></Lines>
      <Slot $w={30} $ml={12}>
        <svg width="21" height="17" viewBox="0 0 21 17" fill="none" stroke="#fff" strokeWidth="1.500">
          <path d="M1 6.300a13.500 13.500 0 0119 0M3.800 9.100a9.500 9.500 0 0113.400 0M6.600 11.800a5.500 5.500 0 017.800 0" /><circle cx="10.500" cy="14.300" r="1.900" fill="#fff" stroke="none" />
        </svg>
      </Slot>
      <Slot $w={30}>
        <svg width="21" height="18" viewBox="0 0 21 18" fill="none" stroke="#fff" strokeWidth="1.400">
          <path d="M1 6.300h3.500L9 2.500v13l-4.500-3.800H1zM11.500 6.500a4 4 0 010 5" /><path d="M13.800 4.500a6.500 6.500 0 010 9" stroke="#9a9a9a" /><path d="M16.300 2.500a9.300 9.300 0 010 13" stroke="#555" />
        </svg>
      </Slot>
      <Slot $w={30}>
        <svg width="21" height="18" viewBox="0 0 21 18">
          <rect x="2" y="4.800" width="15.500" height="11" rx="2.500" fill="none" stroke="#fff" strokeWidth="1.500" />
          <rect x="4.500" y="7.200" width="10.500" height="6.200" rx="0.800" fill="#fff" /><path d="M18.300 8h1.200a.8.800 0 01.8.8v3a.8.800 0 01-.8.800h-1.200z" fill="#fff" />
          <path d="M4.500 .5L.3 6.500H3L2 11l5-6.500H4.300z" fill="#fff" stroke="#202020" strokeWidth="0.800" />
        </svg>
      </Slot>
      <Lines $w={82} $ml={11} $align="right" $ls={-0.200}><span>11:11</span><span>08/12/2024</span></Lines>
      <Slot $w={40}>
        <svg width="18" height="20" viewBox="0 0 18 20" fill="#2ba0f8"><path d="M9 .5a6 6 0 016 6v5l2 3.500v.8H1V15l2-3.500v-5a6 6 0 016-6zM6 16.800h6a3 2.700 0 01-6 0z" /></svg>
      </Slot>
      <Slot $w={15} />
    </Taskbar>
  );
}

export default function App() {
  return (
    <Screen>
      <GlobalStyle />
      <BrowserChrome />
      <Dashboard />
      <TaskbarView />
    </Screen>
  );
}
